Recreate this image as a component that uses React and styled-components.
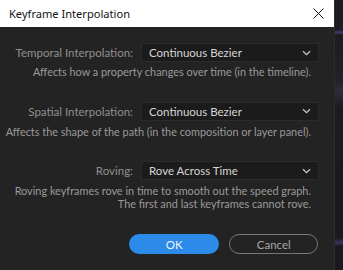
import React from "react";
import styled, { createGlobalStyle } from "styled-components";

const Global = createGlobalStyle`
  html, body { margin: 0; padding: 0; background: #1b1a20; }
  body { width: 343px; height: 270px; overflow: hidden; }
  * { box-sizing: border-box; }
`;

const Screen = styled.div`
  display: flex;
  width: 343px;
  height: 270px;
  background: #19181e;
`;

const Dialog = styled.div`
  width: 335px;
  height: 270px;
  display: flex;
  flex-direction: column;
  background: #232323;
  border-right: 1px solid #2c2c2c;
`;

const Backdrop = styled.div`
  flex: 1;
  background: linear-gradient(180deg, #1d1b24 0%, #1d1b24 11%, #3c3a6a 12%, #1c1b22 13%, #22202a 30%, #2e2c3a 33%, #1c1b22 40%, #1a1920 88%, #3a3560 90%, #1a1920 91%);
`;

const TitleBar = styled.div`
  height: 27px;
  background: #ffffff;
  display: flex;
  align-items: center;
  justify-content: space-between;
  padding: 0 10px 0 9px;
  font-family: "Noto Sans", "Open Sans", sans-serif;
  font-size: 11.1px;
  color: #111;
`;

const Close = styled.svg`
  width: 11px;
  height: 11px;
`;

const Body = styled.div`
  flex: 1;
  padding: 16px 16px 0 0;
  font-family: "Lato", "Noto Sans", sans-serif;
  font-size: 11px;
`;

const Section = styled.div`
  display: flex;
  flex-direction: column;
  margin-bottom: ${p => p.$gap}px;
`;

const Row = styled.div`
  display: grid;
  grid-template-columns: 133px 178px;
  column-gap: 8px;
  align-items: center;
`;

const Label = styled.div`
  text-align: right;
  color: #8f8f8f;
  font-size: 11.5px;
`;

const Select = styled.div`
  height: 19px;
  display: flex;
  align-items: center;
  justify-content: space-between;
  padding: 0 7px 0 7px;
  background: #1b1b1b;
  border: 1px solid #2b2b2b;
  color: #d6d6d6;
  font-size: 11.5px;
`;

const Chevron = styled.svg`
  width: 9px;
  height: 6px;
`;

const Hint = styled.div`
  margin-top: ${p => p.$top}px;
  padding-right: 7px;
  text-align: right;
  color: #9a9a9a;
  line-height: 12.5px;
  font-size: 10.9px;
`;

const Buttons = styled.div`
  display: flex;
  gap: 10px;
  padding-left: 129px;
`;

const Button = styled.button`
  width: ${p => p.$w}px;
  height: 20px;
  border-radius: 10px;
  font-family: "Lato", "Noto Sans", sans-serif;
  font-size: 11.5px;
  display: flex;
  align-items: center;
  justify-content: center;
  padding: 0;
  background: ${p => (p.$primary ? "#2c8ae8" : "transparent")};
  color: ${p => (p.$primary ? "#f2f6fb" : "#a5a5a5")};
  border: ${p => (p.$primary ? "none" : "1.5px solid #767676")};
`;

const ChevronIcon = () => (
  <Chevron viewBox="0 0 9 6">
    <path d="M1 1.2 L4.5 4.6 L8 1.2" fill="none" stroke="#c8c8c8" strokeWidth="1.3" />
  </Chevron>
);

export default function App() {
  return (
    <>
      <Global />
      <Screen>
        <Dialog>
          <TitleBar>
            <span>Keyframe Interpolation</span>
            <Close viewBox="0 0 11 11">
              <path d="M0.5 0.5 L10.5 10.5 M10.5 0.5 L0.5 10.5" stroke="#111" strokeWidth="1" />
            </Close>
          </TitleBar>
          <Body>
            <Section $gap={23}>
              <Row>
                <Label>Temporal Interpolation:</Label>
                <Select>
                  <span>Continuous Bezier</span>
                  <ChevronIcon />
                </Select>
              </Row>
              <Hint $top={4}>Affects how a property changes over time (in the timeline).</Hint>
            </Section>
            <Section $gap={23}>
              <Row>
                <Label>Spatial Interpolation:</Label>
                <Select>
                  <span>Continuous Bezier</span>
                  <ChevronIcon />
                </Select>
              </Row>
              <Hint $top={5}>Affects the shape of the path (in the composition or layer panel).</Hint>
            </Section>
            <Section $gap={24}>
              <Row>
                <Label>Roving:</Label>
                <Select>
                  <span>Rove Across Time</span>
                  <ChevronIcon />
                </Select>
              </Row>
              <Hint $top={5}>
                Roving keyframes rove in time to smooth out the speed graph.
                <br />
                The first and last keyframes cannot rove.
              </Hint>
            </Section>
            <Buttons>
              <Button $primary $w={91}>OK</Button>
              <Button $w={89}>Cancel</Button>
            </Buttons>
          </Body>
        </Dialog>
        <Backdrop />
      </Screen>
    </>
  );
}
